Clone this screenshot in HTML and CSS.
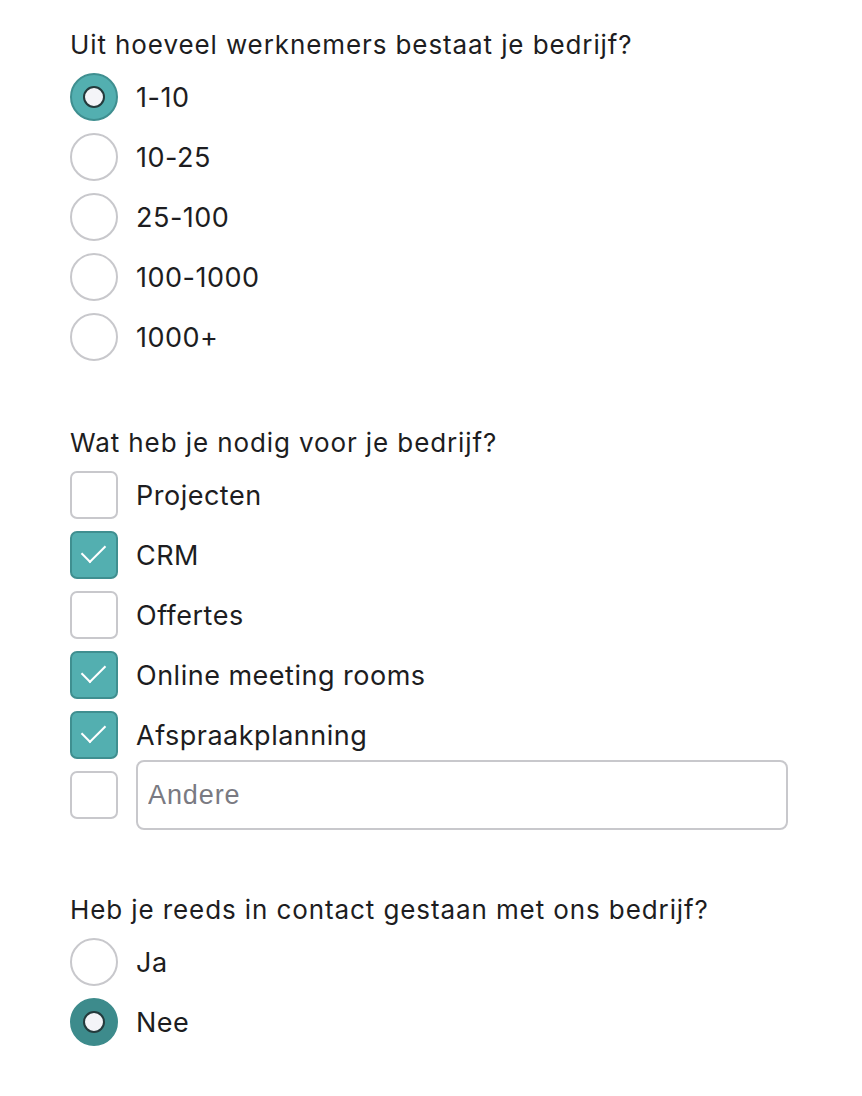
FILE: index.html
```html
<!DOCTYPE html>
<html lang="nl">
<head>
  <meta charset="UTF-8" />
  <meta name="viewport" content="width=device-width, initial-scale=1.0" />
  <title>Vragenlijst</title>
  <link rel="stylesheet" href="styles.css">
</head>
<body>
  <form class="survey">
    <fieldset class="question">
      <legend>Uit hoeveel werknemers bestaat je bedrijf?</legend>
      <label class="option"><input type="radio" name="size" checked><span>1-10</span></label>
      <label class="option"><input type="radio" name="size"><span>10-25</span></label>
      <label class="option"><input type="radio" name="size"><span>25-100</span></label>
      <label class="option"><input type="radio" name="size"><span>100-1000</span></label>
      <label class="option"><input type="radio" name="size"><span>1000+</span></label>
    </fieldset>

    <fieldset class="question needs">
      <legend>Wat heb je nodig voor je bedrijf?</legend>
      <label class="option"><input type="checkbox"><span>Projecten</span></label>
      <label class="option"><input type="checkbox" checked><span>CRM</span></label>
      <label class="option"><input type="checkbox"><span>Offertes</span></label>
      <label class="option"><input type="checkbox" checked><span>Online meeting rooms</span></label>
      <label class="option"><input type="checkbox" checked><span>Afspraakplanning</span></label>
      <div class="option other">
        <input type="checkbox">
        <input type="text" class="other-input" placeholder="Andere">
      </div>
    </fieldset>

    <fieldset class="question">
      <legend>Heb je reeds in contact gestaan met ons bedrijf?</legend>
      <label class="option"><input type="radio" name="contact"><span>Ja</span></label>
      <label class="option"><input type="radio" name="contact" checked class="focus"><span>Nee</span></label>
    </fieldset>
  </form>
</body>
</html>
```

FILE: styles.css
```css
body {
  margin: 0;
  font-family: 'Inter', sans-serif;
  color: #1d1d21;
  background: #fff;
}

.survey {
  padding: 27px 70px 0;
}

.question {
  border: none;
  margin: 0 0 64px;
  padding: 0;
  display: flex;
  flex-direction: column;
  gap: 12px;
}

.question:last-child {
  margin-bottom: 0;
}

.question.needs {
  margin-bottom: 73px;
}

.question legend {
  padding: 0;
  font-size: 26px;
  letter-spacing: 0.9px;
  line-height: 36px;
  margin-bottom: 10px;
}

.option {
  display: flex;
  align-items: center;
  gap: 18px;
  height: 48px;
  font-size: 27px;
  letter-spacing: 0.5px;
}

.option input[type="radio"],
.option input[type="checkbox"] {
  appearance: none;
  margin: 0;
  flex: none;
  width: 48px;
  height: 48px;
  border: 2px solid #c8c8cc;
  background: #fff;
  position: relative;
}

.option input[type="radio"] {
  border-radius: 50%;
}

.option input[type="radio"]:checked {
  background: #53afb0;
  border-color: #3f8f90;
}

.option input[type="radio"]:checked::after {
  content: "";
  position: absolute;
  left: 11px;
  top: 11px;
  width: 22px;
  height: 22px;
  box-sizing: border-box;
  border-radius: 50%;
  background: #f4f4f8;
  border: 2.5px solid #243a3c;
}

.option input[type="radio"].focus:checked {
  background: #3d8b8c;
  border-color: #3d8b8c;
}

.option input[type="checkbox"] {
  border-radius: 7px;
}

.option input[type="checkbox"]:checked {
  background: #53afb0;
  border-color: #3f8f90;
}

.option input[type="checkbox"]:checked::after {
  content: "";
  position: absolute;
  left: 15px;
  top: 6px;
  width: 11px;
  height: 21px;
  border: solid #fff;
  border-width: 0 2px 2px 0;
  transform: rotate(45deg);
}

.other-input {
  flex: 1;
  max-width: 652px;
  height: 70px;
  margin: -11px 0;
  box-sizing: border-box;
  border: 2px solid #c8c8cc;
  border-radius: 8px;
  padding: 0 10px;
  font-family: 'Liberation Sans', sans-serif;
  font-size: 27px;
  letter-spacing: 0.9px;
  color: #1d1d21;
}

.other-input::placeholder {
  color: #7a7a82;
}
```
